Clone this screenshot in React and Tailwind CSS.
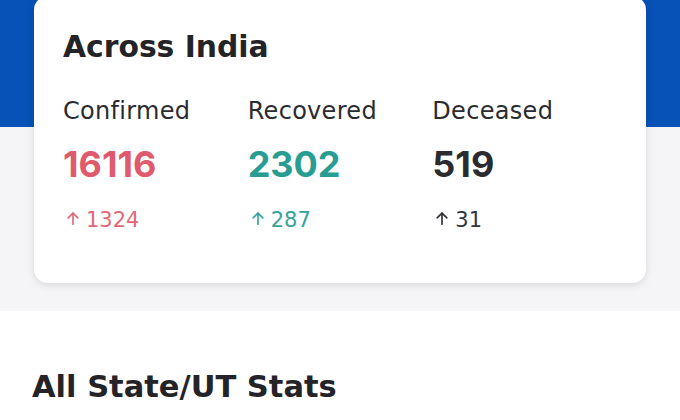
import React from "react";

function Arrow({ color }) {
  return (
    <svg width="12" height="13" viewBox="0 0 12 13" fill="none" stroke={color} strokeWidth="1.7" strokeLinecap="round" strokeLinejoin="round">
      <path d="M6 12.2V1.2" />
      <path d="M1.2 5.8L6 1.1L10.8 5.8" />
    </svg>
  );
}

function Stat({ label, value, delta, color, deltaColor }) {
  return (
    <div className="w-[185px] flex flex-col">
      <div className="text-[24px] leading-none tracking-[0.3px] text-[#2b2b30] font-['DejaVu_Sans',sans-serif]">{label}</div>
      <div className="mt-[23px] text-[36px] leading-none font-bold" style={{ color }}>{value}</div>
      <div className="mt-[28.5px] flex items-start text-[21px] leading-none font-['DejaVu_Sans',sans-serif]" style={{ color: deltaColor }}>
        <span className="ml-[4px] mr-[7px] mt-[2px] block"><Arrow color={deltaColor} /></span>
        <span>{delta}</span>
      </div>
    </div>
  );
}

export default function App() {
  return (
    <div className="w-[680px] h-[420px] overflow-hidden bg-white" style={{ fontFamily: "Inter, 'Open Sans', sans-serif" }}>
      <div className="bg-[#f5f5f7] pb-[28px]">
        <div className="h-[127px] bg-[#0752b7]" />
        <div className="relative mx-[34px] -mt-[131px] h-[287px] rounded-[14px] bg-white shadow-[0_2px_8px_rgba(0,0,0,0.12)] px-[29px] pt-[36px]">
          <div className="text-[29.8px] leading-none font-bold text-[#232328] font-['DejaVu_Sans',sans-serif]">Across India</div>
          <div className="mt-[37px] flex">
            <Stat label="Confirmed" value="16116" delta="1324" color="#e05a6d" deltaColor="#e2687a" />
            <Stat label="Recovered" value="2302" delta="287" color="#2a9d93" deltaColor="#35a39a" />
            <Stat label="Deceased" value="519" delta="31" color="#2b2b30" deltaColor="#34343a" />
          </div>
        </div>
      </div>
      <div className="px-[32px] pt-[61.2px]">
        <div className="text-[30.5px] leading-none font-bold text-[#232328] font-['DejaVu_Sans',sans-serif]">All State/UT Stats</div>
      </div>
    </div>
  );
}
